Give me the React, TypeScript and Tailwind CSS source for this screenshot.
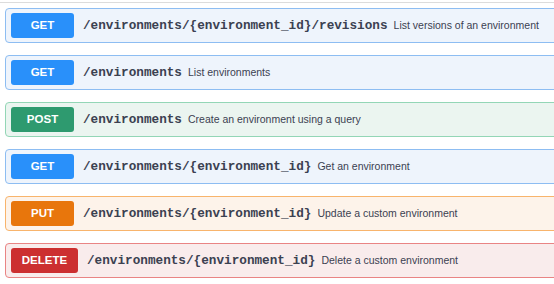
import React from "react";

type Op = {
  method: string;
  path: string;
  summary: string;
  row: string;
  badge: string;
  badgeWidth: string;
};

const ops: Op[] = [
  {
    method: "GET",
    path: "/environments/{environment_id}/revisions",
    summary: "List versions of an environment",
    row: "bg-[#eef4fc] border-[#8dbdf2]",
    badge: "bg-[#2990fa]",
    badgeWidth: "w-[63px]",
  },
  {
    method: "GET",
    path: "/environments",
    summary: "List environments",
    row: "bg-[#eef4fc] border-[#8dbdf2]",
    badge: "bg-[#2990fa]",
    badgeWidth: "w-[63px]",
  },
  {
    method: "POST",
    path: "/environments",
    summary: "Create an environment using a query",
    row: "bg-[#ebf5f0] border-[#93d6b6]",
    badge: "bg-[#2e9a6f]",
    badgeWidth: "w-[63px]",
  },
  {
    method: "GET",
    path: "/environments/{environment_id}",
    summary: "Get an environment",
    row: "bg-[#eef4fc] border-[#8dbdf2]",
    badge: "bg-[#2990fa]",
    badgeWidth: "w-[63px]",
  },
  {
    method: "PUT",
    path: "/environments/{environment_id}",
    summary: "Update a custom environment",
    row: "bg-[#fdf3ea] border-[#f8b46c]",
    badge: "bg-[#e8760c]",
    badgeWidth: "w-[63px]",
  },
  {
    method: "DELETE",
    path: "/environments/{environment_id}",
    summary: "Delete a custom environment",
    row: "bg-[#f9ecec] border-[#e98484]",
    badge: "bg-[#cc2f30]",
    badgeWidth: "w-[67px]",
  },
];

export default function App() {
  return (
    <div className="w-[554px] h-[284px] overflow-hidden bg-white">
      <div className="mt-[2px] h-px bg-[#dcdcdc]" />
      <div className="flex flex-col gap-[12px] pt-[5px] pl-[5px]">
        {ops.map((op, i) => (
          <div
            key={i}
            className={`flex items-center h-[35px] w-[580px] shrink-0 border rounded-[4px] ${op.row}`}
          >
            <div
              className={`ml-[5px] h-[25px] ${op.badgeWidth} rounded-[3px] flex items-center justify-center text-white font-bold text-[11.5px] ${op.badge}`}
              style={{ fontFamily: '"Liberation Sans", Arial, sans-serif' }}
            >
              {op.method}
            </div>
            <span
              className="ml-[9px] font-bold text-[12.7px] text-[#3b4151] whitespace-nowrap"
              style={{ fontFamily: '"Liberation Mono", "Courier New", monospace' }}
            >
              {op.path}
            </span>
            <span
              className="ml-[6px] text-[10.5px] text-[#3b4151] whitespace-nowrap"
              style={{ fontFamily: '"Liberation Sans", Arial, sans-serif' }}
            >
              {op.summary}
            </span>
          </div>
        ))}
      </div>
    </div>
  );
}
